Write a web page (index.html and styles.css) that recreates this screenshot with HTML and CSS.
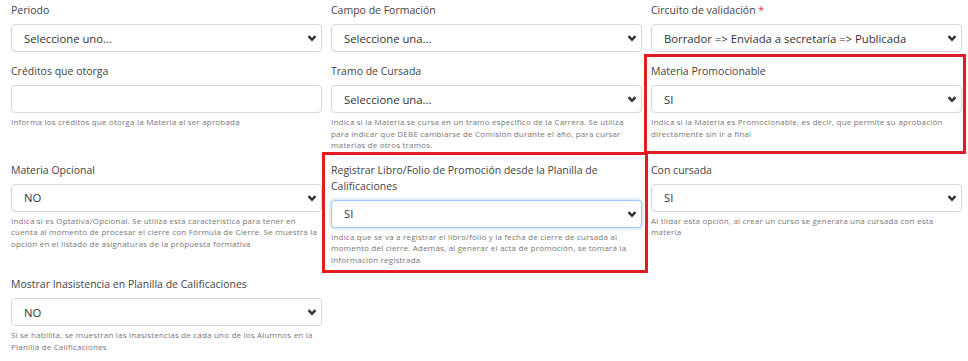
FILE: index.html
```html
<!DOCTYPE html>
<html lang="es">
<head>
  <meta charset="UTF-8" />
  <meta name="viewport" content="width=device-width, initial-scale=1" />
  <title>Materia - Datos generales</title>
  <link rel="stylesheet" href="styles.css">
</head>
<body>
  <div class="page">
    <div class="form-grid">

      <!-- Fila 1 -->
      <div class="form-group">
        <label>Periodo</label>
        <div class="select"><span>Seleccione uno...</span><svg viewBox="0 0 10 10"><path d="M1.5 3.2 L5 6.7 L8.5 3.2"/></svg></div>
      </div>
      <div class="form-group">
        <label>Campo de Formación</label>
        <div class="select"><span>Seleccione una...</span><svg viewBox="0 0 10 10"><path d="M1.5 3.2 L5 6.7 L8.5 3.2"/></svg></div>
      </div>
      <div class="form-group">
        <label>Circuito de validación <span class="req">*</span></label>
        <div class="select"><span>Borrador =&gt; Enviada a secretaría =&gt; Publicada</span><svg viewBox="0 0 10 10"><path d="M1.5 3.2 L5 6.7 L8.5 3.2"/></svg></div>
      </div>

      <!-- Fila 2 -->
      <div class="form-group">
        <label>Créditos que otorga</label>
        <input type="text" class="input" />
        <p class="help">Informa los créditos que otorga la Materia al ser aprobada</p>
      </div>
      <div class="form-group">
        <label>Tramo de Cursada</label>
        <div class="select"><span>Seleccione una...</span><svg viewBox="0 0 10 10"><path d="M1.5 3.2 L5 6.7 L8.5 3.2"/></svg></div>
        <p class="help">Indica si la Materia se cursa en un tramo especifico de la Carrera. Se utiliza para indicar que DEBE cambiarse de Comisión durante el año, para cursar materias de otros tramos.</p>
      </div>
      <div class="form-group">
        <label>Materia Promocionable</label>
        <div class="select"><span>SI</span><svg viewBox="0 0 10 10"><path d="M1.5 3.2 L5 6.7 L8.5 3.2"/></svg></div>
        <p class="help">Indica si la Materia es Promocionable, es decir, que permite su aprobación directamente sin ir a final</p>
      </div>

      <!-- Fila 3 -->
      <div class="form-group">
        <label>Materia Opcional</label>
        <div class="select"><span>NO</span><svg viewBox="0 0 10 10"><path d="M1.5 3.2 L5 6.7 L8.5 3.2"/></svg></div>
        <p class="help">Indica si es Optativa/Opcional. Se utiliza esta característica para tener en cuenta al momento de procesar el cierre con Fórmula de Cierre. Se muestra la opción en el listado de asignaturas de la propuesta formativa</p>
      </div>
      <div class="form-group">
        <label>Registrar Libro/Folio de Promoción desde la Planilla de Calificaciones</label>
        <div class="select focus"><span>SI</span><svg viewBox="0 0 10 10"><path d="M1.5 3.2 L5 6.7 L8.5 3.2"/></svg></div>
        <p class="help">Indica que se va a registrar el libro/folio y la fecha de cierre de cursada al momento del cierre. Además, al generar el acta de promoción, se tomará la información registrada</p>
      </div>
      <div class="form-group">
        <label>Con cursada</label>
        <div class="select"><span>SI</span><svg viewBox="0 0 10 10"><path d="M1.5 3.2 L5 6.7 L8.5 3.2"/></svg></div>
        <p class="help">Al tildar esta opción, al crear un curso se generara una cursada con esta materia</p>
      </div>

      <!-- Fila 4 -->
      <div class="form-group">
        <label>Mostrar Inasistencia en Planilla de Calificaciones</label>
        <div class="select"><span>NO</span><svg viewBox="0 0 10 10"><path d="M1.5 3.2 L5 6.7 L8.5 3.2"/></svg></div>
        <p class="help">Si se habilita, se muestran las inasistencias de cada uno de los Alumnos en la Planilla de Calificaciones</p>
      </div>
    </div>

    <!-- marcas de revisión -->
    <div class="mark mark-promo"></div>
    <div class="mark mark-libro"></div>
  </div>
</body>
</html>
```

FILE: styles.css
```css
body {
  margin: 0;
  background: #fff;
  font-family: 'Open Sans', 'Noto Sans', sans-serif;
  color: #444;
}
.page {
  position: relative;
  padding: 2px 6px 0 11px;
}
.form-grid {
  display: grid;
  grid-template-columns: repeat(3, 311px);
  column-gap: 9px;
  align-items: start;
}
.form-group {
  margin-bottom: 11px;
}
label {
  display: block;
  font-size: 10.5px;
  line-height: 16px;
  color: #444;
  margin-bottom: 6px;
}
.req {
  color: #e3342f;
}
.select,
.input {
  box-sizing: border-box;
  width: 100%;
  height: 28px;
  border: 1px solid #d4d8dd;
  border-radius: 4px;
  background: #fff;
}
.select {
  display: flex;
  align-items: center;
  justify-content: space-between;
  padding: 0 4px 0 12px;
  font-size: 11.3px;
  color: #333;
}
.select svg {
  width: 10px;
  height: 10px;
  fill: none;
  stroke: #333;
  stroke-width: 2.4;
}
.select.focus {
  border-color: #9cc3f5;
  box-shadow: 0 0 0 2px rgba(66, 139, 230, 0.15);
}
.input {
  display: block;
  outline: none;
  padding: 0 12px;
}
.help {
  margin: 3px 0 0;
  font-size: 8px;
  letter-spacing: 0.2px;
  line-height: 11.5px;
  color: #777;
}
.mark {
  position: absolute;
  border: 3px solid #e31b23;
}
.mark-promo {
  left: 644px;
  top: 54px;
  width: 316px;
  height: 94px;
}
.mark-libro {
  left: 322px;
  top: 152px;
  width: 320px;
  height: 115px;
}
```
